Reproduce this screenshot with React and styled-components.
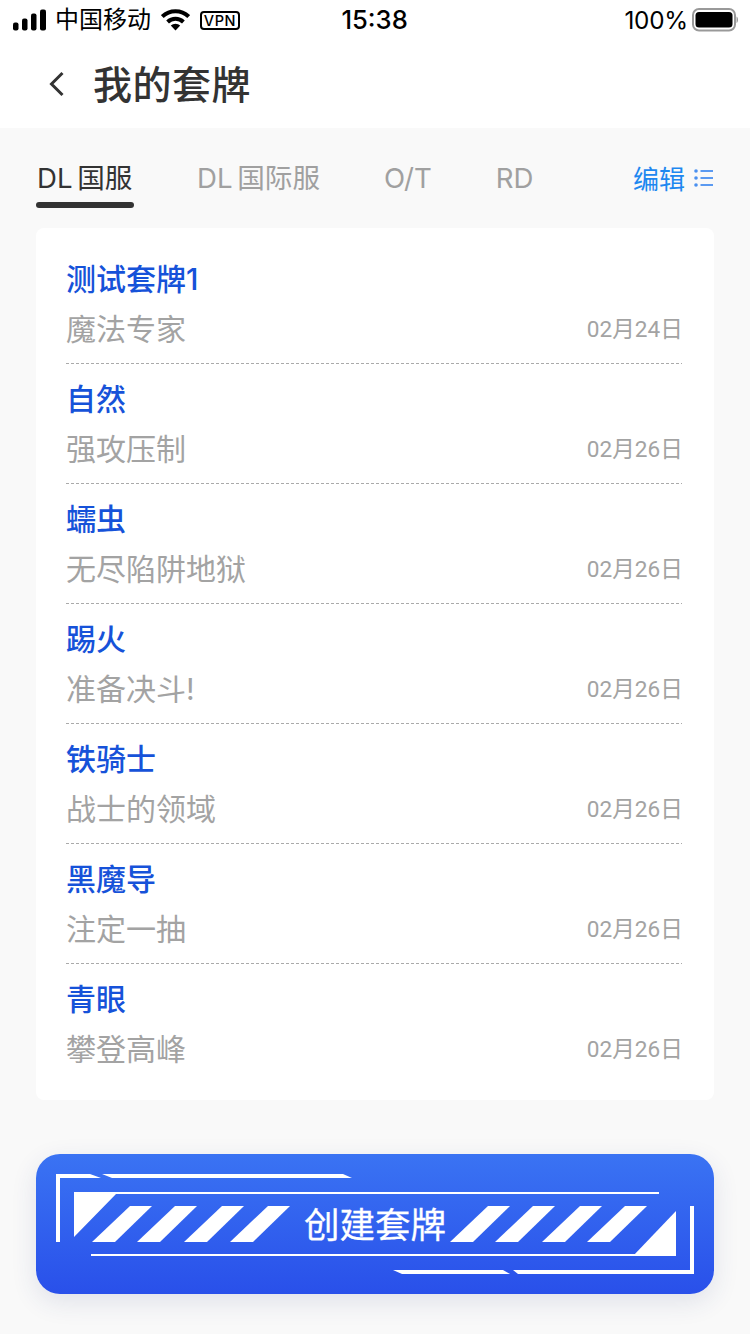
import React from "react";
import styled, { createGlobalStyle } from "styled-components";

const Global = createGlobalStyle`
  html, body { margin: 0; padding: 0; background: #f9f9f9; }
  * { box-sizing: border-box; }
  body { font-family: Inter, "Noto Sans CJK SC", sans-serif; }
`;
const CJK = `Inter, "Noto Sans CJK SC", sans-serif`;

const Page = styled.div`
  width: 750px; height: 1334px; overflow: hidden; background: #f9f9f9;
  display: flex; flex-direction: column;
`;
const TopArea = styled.header`
  background: #fff; height: 128px; display: flex; flex-direction: column;
`;
const StatusBar = styled.div`
  height: 40px; padding: 0 12px 0 13px; display: flex; align-items: center;
  position: relative; color: #000;
`;
const StatusLeft = styled.div`
  display: flex; align-items: center; flex: 1;
`;
const Carrier = styled.span`
  font: 400 24px/40px ${CJK}; margin-left: 9px; width: 96px; white-space: nowrap;
`;
const Time = styled.span`
  font: 500 25.6px/40px Inter, sans-serif; width: 66px; text-align: center; margin-right: 217px; white-space: nowrap;
`;
const Battery = styled.span`
  font: 400 24.3px/40px Inter, sans-serif; white-space: nowrap; margin-right: 4px; letter-spacing: -0.2px;
`;
const TitleBar = styled.div`
  height: 88px; display: flex; align-items: center; padding-left: 48px; padding-bottom: 1px;
`;
const Title = styled.h1`
  margin: 0 0 4px 29px; font: 500 39px/84px "Noto Sans CJK SC", sans-serif; color: #333; letter-spacing: 0.5px;
`;
const Tabs = styled.nav`
  height: 100px; padding: 0 36px; display: flex; position: relative;
`;
const Tab = styled.div`
  font: 400 27.6px/40px ${CJK};
  color: ${p => (p.$active ? "#333" : "#a0a0a0")};
  margin-top: 30px; margin-left: ${p => p.$ml}px; white-space: nowrap; word-spacing: -3px;
  position: relative; height: 44px;
  ${p => p.$active && `
    padding-left: 1px; width: 98px;
    &::after {
      content: ""; position: absolute; left: 0; right: 0; top: 44px; height: 6px;
      background: #333; border-radius: 3px;
    }
  `}
`;
const Edit = styled.div`
  margin-left: auto; margin-top: 30px; height: 40px; display: flex; align-items: center;
  font: 400 26px/40px "Noto Sans CJK SC", sans-serif; color: #1e88f0;
`;
const EditIcon = styled.svg`
  margin-left: 9px; width: 20px; height: 20px; display: block;
`;
const Card = styled.section`
  margin: 0 36px; height: 872px; background: #fff; border-radius: 8px; padding: 16px 32px 0 30px;
`;
const Row = styled.article`
  height: 120px; display: flex; flex-direction: column;
  ${p => !p.$last && `
    background: repeating-linear-gradient(90deg, #aaa 0 3px, transparent 3px 5px) bottom / 100% 1px no-repeat;
  `}
`;
const RowTitle = styled.div`
  font: 500 30px/40px ${CJK}; color: #1652d9; margin-top: 15px; white-space: nowrap;
`;
const RowBottom = styled.div`
  display: flex; align-items: center; justify-content: space-between; margin-top: 10px; height: 40px;
`;
const RowSub = styled.div`
  font: 400 30px/40px ${CJK}; color: #a3a3a3; white-space: nowrap;
`;
const RowDate = styled.div`
  font: 400 22.6px/40px Roboto, "Noto Sans CJK SC", sans-serif; color: #a3a3a3; white-space: nowrap;
  margin: 2px -1px 0 0; letter-spacing: 0.05px;
`;
const CreateButton = styled.button`
  margin: 54px 36px 0; width: 678px; height: 140px; border: 0; padding: 0;
  border-radius: 24px; position: relative; color: #fff; flex: none;
  background: linear-gradient(180deg, #3a73f3 0%, #2950ea 100%);
  box-shadow: 0 8px 26px rgba(40, 60, 120, 0.12);
  font: 400 35.5px "Noto Sans CJK SC", sans-serif; text-align: center;
`;
const ButtonArt = styled.svg`
  position: absolute; left: 0; top: 0; width: 678px; height: 140px; display: block;
`;
const ButtonLabel = styled.span`
  position: relative; display: block; line-height: 140px; margin-top: -3px; -webkit-text-stroke: 0.3px #fff;
`;
const VpnBadge = styled.span`
  margin-left: 10px; width: 40px; height: 19px; border: 2px solid #000; border-radius: 4px;
  font: 500 14.5px/15px Inter, sans-serif; text-align: center; letter-spacing: 0.6px; color: #000; display: block;
`;

const rows = [
  ["测试套牌1", "魔法专家", "02月24日"],
  ["自然", "强攻压制", "02月26日"],
  ["蠕虫", "无尽陷阱地狱", "02月26日"],
  ["踢火", "准备决斗!", "02月26日"],
  ["铁骑士", "战士的领域", "02月26日"],
  ["黑魔导", "注定一抽", "02月26日"],
  ["青眼", "攀登高峰", "02月26日"],
];

const Stripe = ({ x }) => (
  <polygon points={`${x},1242 ${x + 23},1242 ${x + 60},1206 ${x + 38},1206`} fill="#fff" />
);

const Signal = () => (
  <svg width="33" height="22" viewBox="0 0 33 22" style={{ display: "block" }} aria-hidden="true">
    <rect x="0" y="13.5" width="5.5" height="8" rx="2" fill="#000" />
    <rect x="9" y="9.5" width="5.5" height="12" rx="2" fill="#000" />
    <rect x="18" y="4.5" width="5.5" height="17" rx="2" fill="#000" />
    <rect x="27" y="0.5" width="6" height="21" rx="2" fill="#000" />
  </svg>
);
const Wifi = () => (
  <svg width="29" height="22" viewBox="0 0 29 22" style={{ display: "block", marginLeft: 10 }} aria-hidden="true">
    <path d="M1.3 7.6 A19 19 0 0 1 27.7 7.6" fill="none" stroke="#000" strokeWidth="4" />
    <path d="M6.6 13 A11.5 11.5 0 0 1 22.4 13" fill="none" stroke="#000" strokeWidth="4" />
    <path d="M9.8 16.6 A6.8 6.8 0 0 1 19.2 16.6 L14.5 21.5 Z" fill="#000" />
  </svg>
);
const BatteryIcon = () => (
  <svg width="46" height="24" viewBox="0 0 46 24" style={{ display: "block" }} aria-hidden="true">
    <rect x="1" y="1" width="42" height="21.5" rx="6" fill="none" stroke="#999" strokeWidth="2" />
    <rect x="3.5" y="4" width="37" height="15.5" rx="3.5" fill="#000" />
    <path d="M44.5 8.5 C46.5 9.5 46.5 14 44.5 15 Z" fill="#999" />
  </svg>
);

export default function App() {
  return (
    <Page>
      <Global />
      <TopArea>
        <StatusBar>
          <StatusLeft>
            <Signal />
            <Carrier>中国移动</Carrier>
            <Wifi />
            <VpnBadge>VPN</VpnBadge>
          </StatusLeft>
          <Time>15:38</Time>
          <Battery>100%</Battery>
          <BatteryIcon />
        </StatusBar>
        <TitleBar>
          <svg width="16" height="26" viewBox="0 0 16 26" style={{ display: "block" }} aria-hidden="true">
            <path d="M14.5 2 L3.5 13 L14.5 24" fill="none" stroke="#333" strokeWidth="3" />
          </svg>
          <Title>我的套牌</Title>
        </TitleBar>
      </TopArea>
      <Tabs>
        <Tab $active $ml={0}>DL 国服</Tab>
        <Tab $ml={63}>DL 国际服</Tab>
        <Tab $ml={64}>O/T</Tab>
        <Tab $ml={64}>RD</Tab>
        <Edit>
          编辑
          <EditIcon viewBox="0 0 20 20" aria-hidden="true">
            <g fill="#4a90f0">
              <circle cx="2" cy="3" r="1.8" />
              <circle cx="2" cy="10" r="1.8" />
              <circle cx="2" cy="17" r="1.8" />
              <rect x="6.5" y="2.1" width="12.5" height="1.8" />
              <rect x="6.5" y="9.1" width="12.5" height="1.8" />
              <rect x="6.5" y="16.1" width="12.5" height="1.8" />
            </g>
          </EditIcon>
        </Edit>
      </Tabs>
      <Card>
        {rows.map((r, i) => (
          <Row key={r[0]} $last={i === rows.length - 1}>
            <RowTitle>{r[0]}</RowTitle>
            <RowBottom>
              <RowSub>{r[1]}</RowSub>
              <RowDate>{r[2]}</RowDate>
            </RowBottom>
          </Row>
        ))}
      </Card>
      <CreateButton>
        <ButtonArt viewBox="36 1154 678 140" aria-hidden="true">
          <g fill="#fff">
            <polygon points="56,1174 90,1174 101,1178 60,1178 60,1242 56,1242" />
            <polygon points="102,1174 343,1174 352,1178 112,1178" />
            <polygon points="74,1192 659,1192 659,1194 116,1194 74,1237" />
            <rect x="91" y="1254" width="550" height="2" />
            <polygon points="676,1211 676,1256 633,1256" />
            <polygon points="690,1206 694,1206 694,1274 518,1274 513,1270 690,1270" />
            <polygon points="393,1270 503,1270 510,1274 402,1274" />
          </g>
          {[92, 137, 184, 230, 450, 495, 542, 587].map(x => <Stripe key={x} x={x} />)}
        </ButtonArt>
        <ButtonLabel>创建套牌</ButtonLabel>
      </CreateButton>
    </Page>
  );
}
